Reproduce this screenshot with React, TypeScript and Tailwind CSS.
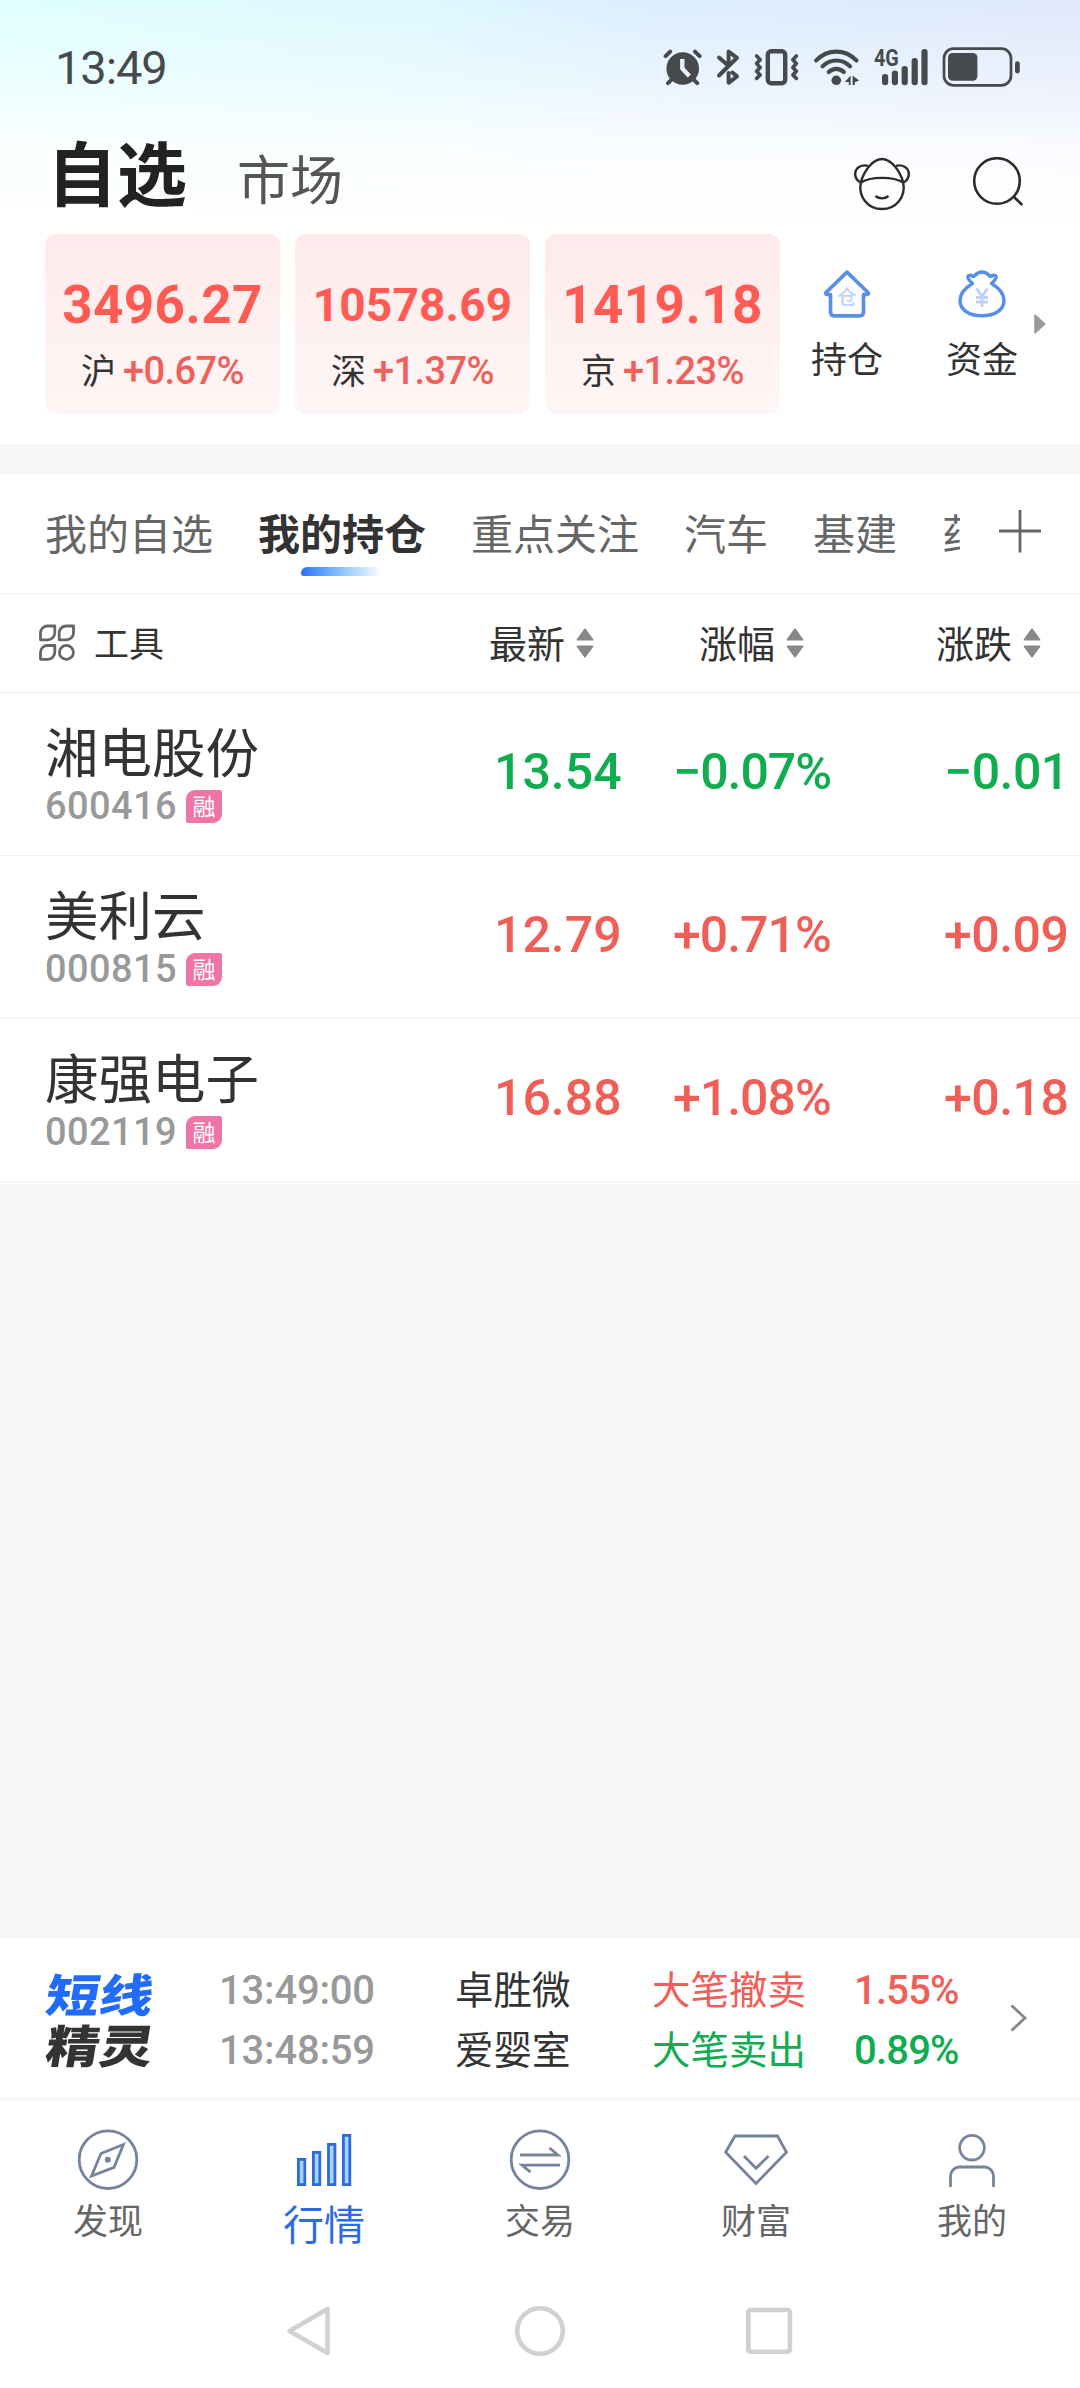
import clsx from 'clsx';
import type { ReactNode } from 'react';

type Trend = 'up' | 'down';

interface IndexQuote {
  market: string;
  value: string;
  change: string;
  valueClass: string;
}

interface Holding {
  name: string;
  code: string;
  price: string;
  percent: string;
  delta: string;
  trend: Trend;
}

interface Alert {
  time: string;
  stock: string;
  event: string;
  percent: string;
  trend: Trend;
}

const INDEXES: IndexQuote[] = [
  { market: '沪', value: '3496.27', change: '+0.67%', valueClass: 'text-[53px] tracking-[0.4px]' },
  { market: '深', value: '10578.69', change: '+1.37%', valueClass: 'text-[46px] tracking-[0.2px]' },
  { market: '京', value: '1419.18', change: '+1.23%', valueClass: 'text-[53px] tracking-[0.4px]' },
];

const GROUPS = ['我的自选', '我的持仓', '重点关注', '汽车', '基建', '药业'];
const ACTIVE_GROUP = '我的持仓';

const HOLDINGS: Holding[] = [
  { name: '湘电股份', code: '600416', price: '13.54', percent: '−0.07%', delta: '−0.01', trend: 'down' },
  { name: '美利云', code: '000815', price: '12.79', percent: '+0.71%', delta: '+0.09', trend: 'up' },
  { name: '康强电子', code: '002119', price: '16.88', percent: '+1.08%', delta: '+0.18', trend: 'up' },
];

const ALERTS: Alert[] = [
  { time: '13:49:00', stock: '卓胜微', event: '大笔撤卖', percent: '1.55%', trend: 'up' },
  { time: '13:48:59', stock: '爱婴室', event: '大笔卖出', percent: '0.89%', trend: 'down' },
];

const trendColor = (trend: Trend) => (trend === 'up' ? 'text-[#f05f57]' : 'text-[#0fac50]');

function Num({ className, children }: { className?: string; children: ReactNode }) {
  return (
    <span className={clsx("whitespace-nowrap font-['Roboto','Liberation_Sans',sans-serif]", className)}>{children}</span>
  );
}

function StatusBar() {
  return (
    <div className="flex items-start justify-between pl-[55px] pr-[60px] pt-[47px] text-[#474a4d]">
      <Num className="pt-px text-[47px] leading-[40px] tracking-[-1.1px]">13:49</Num>
      <div className="flex gap-[14px]">
        <svg width="39" height="40" viewBox="0 0 39 40" fill="none" stroke="currentColor" strokeWidth="4" strokeLinecap="round">
          <circle cx="19.7" cy="21.5" r="16.3" fill="currentColor" stroke="none" />
          <path d="M2.6 9.2 7.2 4.6M36.6 9.2 32 4.6M5 36.2l4-4M34.2 36.2l-4-4" />
          <path d="M19.3 12v9.5l7 7.5" stroke="#e6effb" strokeWidth="4.4" strokeLinecap="butt" strokeLinejoin="round" />
        </svg>
        <svg width="24" height="40" viewBox="0 0 24 40" fill="none" stroke="currentColor" strokeWidth="4" strokeLinecap="round" strokeLinejoin="round">
          <path d="M3 10.5 12.6 19M12.6 19V4.6l8.4 6.2L3 28.5" />
          <path d="M12.6 26v9.8l8.4-6.4-4.6-3.9" />
        </svg>
        <svg width="45" height="40" viewBox="0 0 45 40" fill="none" stroke="currentColor" strokeLinecap="round" strokeLinejoin="round">
          <rect x="13.8" y="4.2" width="17.4" height="32" rx="3.4" strokeWidth="4.4" />
          <path d="m2.6 9 3.6 3.8-3.6 3.8 3.6 3.8-3.6 3.8L6.2 28l-3.6 3.4" strokeWidth="3.6" />
          <path d="m42.4 9-3.6 3.8 3.6 3.8-3.6 3.8 3.6 3.8-3.6 3.8 3.6 3.4" strokeWidth="3.6" />
        </svg>
        <svg width="47" height="40" viewBox="0 0 47 40" fill="none" stroke="currentColor" strokeWidth="4.2" strokeLinecap="round">
          <path d="M3.2 13.4C14.6 1.6 32 1.6 43.4 13.4M9.6 19.2c8-7.6 19.4-7.6 27.4 0M15.8 25c4.4-4.2 10.6-4.2 15 0" />
          <circle cx="23.3" cy="33.3" r="4.8" fill="currentColor" stroke="none" />
          <path d="M37.6 28.6v9.4h-1.8v-3h-4zM39.6 28.6l6.6 4.8-4.4 1.8v2.8h-2.2z" fill="currentColor" stroke="none" />
        </svg>
        <div className="relative h-10 w-[54px]">
          <Num className="absolute left-0 top-px origin-left scale-x-[0.82] text-[24px] font-bold leading-[20px]">4G</Num>
          <svg width="54" height="40" viewBox="0 0 54 40" fill="currentColor">
            <rect x="8" y="27" width="6.2" height="11.2" rx="3" />
            <rect x="17.8" y="23.4" width="6.2" height="14.8" rx="3" />
            <rect x="27.6" y="19" width="6.2" height="19.2" rx="3" />
            <rect x="37.6" y="11" width="6.2" height="27.2" rx="3" />
            <rect x="47.4" y="2" width="6.2" height="36.2" rx="3" />
          </svg>
        </div>
        <svg width="78" height="40" viewBox="0 0 78 40">
          <rect x="2" y="1.7" width="67" height="36.6" rx="9.6" fill="none" stroke="currentColor" strokeWidth="2.7" />
          <rect x="6" y="6" width="29.4" height="27.8" rx="4.6" fill="currentColor" />
          <rect x="73" y="14.2" width="4.8" height="12.2" rx="2.4" fill="currentColor" />
        </svg>
      </div>
    </div>
  );
}

function TitleBar() {
  return (
    <div className="mb-6 mt-[42px] flex h-20 items-center pl-[47px] pr-[55px]">
      <h1 className="pt-px text-[70px] font-bold leading-[80px] text-[#222]">自选</h1>
      <span className="ml-[50px] pt-[14px] text-[53px] leading-[60px] text-[#555]">市场</span>
      <div className="ml-auto flex items-center gap-[60px] pt-[26px]">
        <svg width="60" height="56" viewBox="0 0 60 56" fill="none" stroke="#2c2c2c" strokeWidth="2.4">
          <path d="M9.8 27.5C7 42 17 54 31 54s24-12 21.200-26.500" />
          <path d="M9.800 27.500C13 15.500 22 4 31 4s18 11.500 21.200 23.500" />
          <path d="M9.800 27.500c10-6.200 32.400-6.200 42.400 0" />
          <path d="M17 10.800C10 9 4.200 13 4.200 19c0 4 2.200 7 5.600 8.500M45 10.800c7-1.800 12.800 2.200 12.800 8.200 0 4-2.200 7-5.600 8.500" />
          <path d="M24.500 41c3.700 3.200 9.300 3.200 13 0" />
        </svg>
        <svg width="54" height="52" viewBox="0 0 54 52" fill="none" stroke="#2c2c2c" strokeWidth="2.6">
          <circle cx="26" cy="24" r="22.800" />
          <path d="m42.500 39.500 8.800 8.500" />
        </svg>
      </div>
    </div>
  );
}

function IndexCards() {
  return (
    <div className="flex h-[210px] pl-[45px]">
      <div className="flex gap-[15px]">
        {INDEXES.map((item) => (
          <div
            key={item.market}
            className="flex h-[180px] w-[235px] flex-col items-center rounded-[11px] bg-linear-to-b from-[#feeaea] to-[#fef6f6] pt-[41px]"
          >
            <Num className={clsx('font-bold leading-[60px] text-[#fd5b53]', item.valueClass)}>{item.value}</Num>
            <div className="mt-4 flex items-center leading-[40px]">
              <span className="-mt-1 text-[35px] text-[#333]">{item.market}</span>
              <Num className="ml-[7px] text-[38px] font-medium tracking-[-0.6px] text-[#ee615a]">{item.change}</Num>
            </div>
          </div>
        ))}
      </div>
      <div className="ml-[22px] flex gap-[45px] pt-9">
        <div className="flex w-[90px] flex-col items-center">
          <svg width="48" height="48" viewBox="0 0 48 48">
            <path
              d="M24 2.200 45 22.500c.8.900.3 2-.9 2h-3.600V42c0 2.300-1.500 3.800-3.800 3.800H11.300C9 45.800 7.500 44.300 7.500 42V24.500H3.900c-1.200 0-1.700-1.100-.9-2z"
              fill="none"
              stroke="#5a8fe8"
              strokeWidth="3.700"
              strokeLinejoin="round"
            />
            <text x="24" y="35" textAnchor="middle" fontSize="20" fontWeight="500" fill="#bcd3fa">仓</text>
          </svg>
          <span className="mt-[19px] text-[36px] leading-[40px] text-[#333]">持仓</span>
        </div>
        <div className="flex w-[90px] flex-col items-center">
          <svg width="48" height="48" viewBox="0 0 48 48">
            <path
              d="M14.500 13.500c-2-1.800-4.400-3.700-4.600-6.300C9.800 4.800 13 5 15.200 6.400 17 6.800 17.500 2 24 2s7 4.800 8.800 4.400C35 5 38.200 4.800 38.100 7.200c-.2 2.600-2.600 4.500-4.600 6.300C41 18 46 24.500 46 30.500 46 40 36.500 45.800 24 45.800S2 40 2 30.500C2 24.500 7 18 14.500 13.500z"
              fill="none"
              stroke="#5a8fe8"
              strokeWidth="3.500"
              strokeLinejoin="round"
            />
            <path d="m18.500 18.500 5.500 8 5.500-8M24 26.500V37M18 27.500h12M18 32h12" fill="none" stroke="#bcd3fa" strokeWidth="2.800" />
          </svg>
          <span className="mt-[19px] text-[36px] leading-[40px] text-[#333]">资金</span>
        </div>
      </div>
      <svg className="ml-[7px] mt-[80px]" width="12" height="20" viewBox="0 0 12 20">
        <path d="M1 1.200v17.600L10.800 10z" fill="#999" stroke="#999" strokeWidth="1.600" strokeLinejoin="round" />
      </svg>
    </div>
  );
}

function GroupTabs() {
  return (
    <div className="flex h-[120px] border-b border-[#f0f0f0] pl-[45px]">
      <div className="flex w-[915px] gap-[45px] overflow-hidden">
        {GROUPS.map((group) => {
          const active = group === ACTIVE_GROUP;
          return (
            <div key={group} className="flex shrink-0 flex-col items-center pt-[38px]">
              <span
                className={clsx(
                  'whitespace-nowrap text-[42px] leading-[40px]',
                  active ? 'font-bold text-[#333]' : 'text-[#666]',
                )}
              >
                {group}
              </span>
              {active && (
                <span className="mt-[15px] h-[9px] w-[82px] rounded-tl-[7px] rounded-bl-[3px] rounded-br-[7px] bg-linear-to-r from-[#2a6ff7] via-[#8cc5ff] to-white" />
              )}
            </div>
          );
        })}
      </div>
      <svg className="ml-[38px] mt-9" width="44" height="44" viewBox="0 0 44 44">
        <path d="M22 0v42.500M1 21h42" stroke="#666" strokeWidth="2.800" />
      </svg>
    </div>
  );
}

function SortHeader({ label, className }: { label: string; className?: string }) {
  return (
    <div className={clsx('flex items-center', className)}>
      <span className="-mt-[3px] text-[38px] leading-[40px] text-[#333]">{label}</span>
      <svg className="ml-[11px]" width="18" height="30" viewBox="0 0 18 30" fill="#888" stroke="#888" strokeWidth="1.600" strokeLinejoin="round">
        <path d="M9 1.200 16.600 11.800H1.400zM9 28.800 16.600 18.200H1.400z" />
      </svg>
    </div>
  );
}

function ListHeader() {
  return (
    <div className="flex h-[99px] items-center border-b border-[#f0f0f0]">
      <div className="flex w-[489px] items-center pl-[39px]">
        <svg width="36" height="38" viewBox="0 0 36 38" fill="none" stroke="#666" strokeWidth="2.800">
          <path d="M8 2h7.800v6.800a7 7 0 0 1-7 7H1.500V8.800A6.800 6.800 0 0 1 8 2z" strokeLinejoin="round" />
          <path d="M27 2h7.500v6.800a7 7 0 0 1-7 7h-7.300V8.800A6.800 6.800 0 0 1 27 2z" strokeLinejoin="round" />
          <path d="M8 21.500h7.800v6.800a7 7 0 0 1-7 7H1.500v-7A6.800 6.800 0 0 1 8 21.500z" strokeLinejoin="round" />
          <circle cx="27.400" cy="28.400" r="7" />
        </svg>
        <span className="-mt-[2px] ml-[19px] text-[35px] leading-[40px] text-[#333]">工具</span>
      </div>
      <SortHeader label="最新" className="w-[210px]" />
      <SortHeader label="涨幅" className="w-[237px]" />
      <SortHeader label="涨跌" />
    </div>
  );
}

function HoldingRow({ item }: { item: Holding }) {
  return (
    <div className="flex h-[163px] border-b border-[#f0f0f0]">
      <div className="w-[494px] pl-[45px] pt-[27px]">
        <div className="text-[53.500px] leading-[60px] text-[#333]">{item.name}</div>
        <div className="mt-[6px] flex items-center">
          <Num className="text-[38px] font-medium leading-[40px] tracking-[0.400px] text-[#999]">{item.code}</Num>
          <span className="ml-[9px] flex h-[33px] w-9 items-center justify-center rounded-[2px] rounded-tl-[9px] rounded-br-[9px] bg-[#ee75a6] pb-[3px] text-[23px] leading-[30px] text-white">
            融
          </span>
        </div>
      </div>
      <div className={clsx('flex pt-[49px] text-[50px] font-medium leading-[60px]', trendColor(item.trend))}>
        <Num className="w-[179px]">{item.price}</Num>
        <Num className="w-[271px] tracking-[-1px]">{item.percent}</Num>
        <Num className="tracking-[-0.500px]">{item.delta}</Num>
      </div>
    </div>
  );
}

function AlertBar() {
  return (
    <div className="flex h-[162px] items-center border-b-[3px] border-[#f8f8f8] bg-white pl-[47px]">
      <div className="w-[172px] text-[45px] font-black leading-[51px] text-[#333]">
        <div className="w-[90px] origin-left -skew-x-8 scale-x-[1.190] text-[#226bf8]">短线</div>
        <div className="w-[90px] origin-left -skew-x-8 scale-x-[1.190]">精灵</div>
      </div>
      <div className="pt-[2px]">
        {ALERTS.map((alert) => (
          <div key={alert.time} className="flex h-[60px] items-center leading-[60px]">
            <Num className="w-[236px] pt-[5px] text-[40px] font-medium tracking-[-0.200px] text-[#999]">{alert.time}</Num>
            <span className="-mt-1 w-[197px] text-[38.500px] text-[#333]">{alert.stock}</span>
            <span className={clsx('-mt-1 w-[202px] text-[38.500px]', trendColor(alert.trend))}>{alert.event}</span>
            <Num className={clsx('w-[156px] pt-[5px] text-[40px] font-medium tracking-[-0.800px]', trendColor(alert.trend))}>
              {alert.percent}
            </Num>
          </div>
        ))}
      </div>
      <svg width="18" height="28" viewBox="0 0 18 28" fill="none" stroke="#888" strokeWidth="2.800">
        <path d="m1.500 1.500 13.500 12.500L1.500 26.500" />
      </svg>
    </div>
  );
}

function NavItem({ label, active, children }: { label: string; active?: boolean; children: ReactNode }) {
  return (
    <div className="flex w-[216px] flex-col items-center pt-[29px]">
      <svg width="64" height="62" viewBox="0 0 64 62" fill="none" stroke="#75849b" strokeWidth="2.800">
        {children}
      </svg>
      {active ? (
        <span className="mt-[6px] text-[41px] leading-[50px] text-[#2b6bea]">{label}</span>
      ) : (
        <span className="mt-[3px] text-[35px] leading-[50px] text-[#666]">{label}</span>
      )}
    </div>
  );
}

function BottomNav() {
  return (
    <div className="flex h-[186px] bg-white">
      <NavItem label="发现">
        <circle cx="32" cy="30.700" r="28.800" />
        <path d="M47.500 15.500 38 38.300 15.500 47 25 24.500z" />
        <circle cx="31.800" cy="30.800" r="3" fill="#75849b" stroke="none" />
      </NavItem>
      <NavItem label="行情" active>
        <g fill="#a5d5ff" stroke="#2f6bd8">
          <rect x="6.400" y="30.400" width="6.400" height="25.200" />
          <rect x="21.400" y="23.400" width="6.400" height="32.200" />
          <rect x="36.500" y="15.400" width="6.400" height="40.200" />
          <rect x="51.400" y="6.400" width="6.400" height="49.200" />
        </g>
      </NavItem>
      <NavItem label="交易">
        <circle cx="32" cy="30.700" r="28.800" />
        <path d="M12 26h38l-8.500-7M52 36.200H14l8.500 7" />
      </NavItem>
      <NavItem label="财富">
        <path d="M11 7h42.500l9 16.200L32 54.500 1.700 23.200z" />
        <path d="m20 27 12 12.300L44.500 27" />
      </NavItem>
      <NavItem label="我的">
        <circle cx="32" cy="18.700" r="12.300" />
        <path d="M10.500 58V47a9 9 0 0 1 9-9h25a9 9 0 0 1 9 9v11" />
      </NavItem>
    </div>
  );
}

function SystemNav() {
  return (
    <div className="flex items-center pb-[30px] pl-[286px]">
      <svg width="46" height="54" viewBox="0 0 46 54" fill="none" stroke="#d1d1d1" strokeWidth="4.600" strokeLinejoin="round">
        <path d="M41.500 5v44L3.500 27z" />
      </svg>
      <svg className="ml-[181px]" width="54" height="54" viewBox="0 0 54 54" fill="none" stroke="#d1d1d1" strokeWidth="4.600">
        <circle cx="27" cy="27" r="22.800" />
      </svg>
      <svg className="ml-[178px]" width="48" height="54" viewBox="0 0 48 54" fill="none" stroke="#d1d1d1" strokeWidth="4.600">
        <rect x="3.300" y="6" width="41.600" height="41.800" rx="2" />
      </svg>
    </div>
  );
}

export default function App() {
  return (
    <div className="flex h-[2388px] w-[1080px] flex-col overflow-hidden bg-white font-['Noto_Sans_CJK_SC',sans-serif]">
      <header className="h-[444px] shrink-0 bg-[linear-gradient(to_bottom,rgba(255,255,255,0)_0px,rgba(255,255,255,0.400)_80px,rgba(255,255,255,0.850)_150px,#fff_230px),linear-gradient(to_right,#e0ffff_0%,#ddf8ff_40%,#dceeff_60%,#dfe8fb_100%)]">
        <StatusBar />
        <TitleBar />
        <IndexCards />
      </header>
      <div className="h-[30px] shrink-0 bg-[#f5f6f8]" />
      <GroupTabs />
      <ListHeader />
      {HOLDINGS.map((item) => (
        <HoldingRow key={item.code} item={item} />
      ))}
      <div className="mt-[2px] flex-1 bg-[#f5f6f8]" />
      <AlertBar />
      <BottomNav />
      <div className="h-[18px]" />
      <SystemNav />
    </div>
  );
}
